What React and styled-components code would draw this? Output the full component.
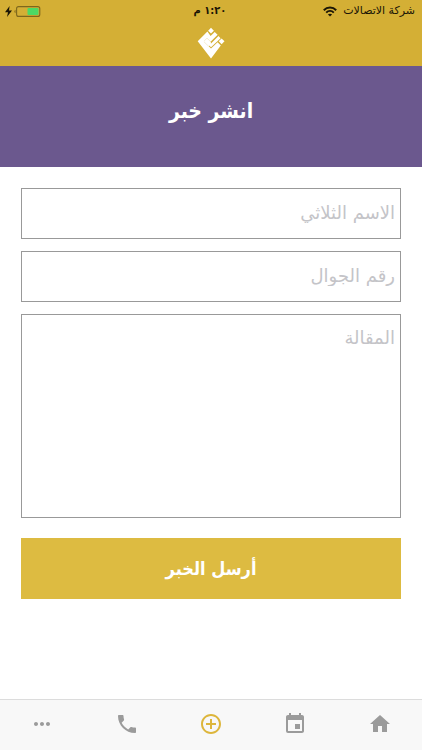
import React, { useState } from 'react';
import styled, { createGlobalStyle } from 'styled-components';
import { MdHome, MdEvent, MdAddCircleOutline, MdPhone, MdMoreHoriz } from 'react-icons/md';

const GlobalStyle = createGlobalStyle`
  * {
    box-sizing: border-box;
  }
  body {
    margin: 0;
    background: #fff;
    font-family: 'DejaVu Sans', sans-serif;
  }
`;

const Screen = styled.div`
  display: flex;
  flex-direction: column;
  min-height: 100vh;
`;

const Header = styled.header`
  background: #d4af35;
`;

const StatusBar = styled.div`
  display: grid;
  grid-template-columns: 1fr auto 1fr;
  align-items: center;
  height: 22px;
  padding: 0 7px 0 5px;
  color: #1b1606;
  font-size: 11px;
  line-height: 20px;
`;

const Carrier = styled.div`
  display: flex;
  align-items: center;
  gap: 6px;
`;

const Clock = styled.div`
  font-family: 'DejaVu Sans Condensed', 'DejaVu Sans', sans-serif;
  font-weight: bold;
`;

const Power = styled.div`
  display: flex;
  align-items: center;
  justify-content: flex-end;
  gap: 2px;
`;

const LogoBar = styled.div`
  display: flex;
  justify-content: center;
  height: 44px;
  padding-top: 5px;
`;

const Hero = styled.div`
  display: flex;
  align-items: center;
  justify-content: center;
  height: 101px;
  padding-bottom: 12px;
  background: #6b588e;
`;

const Title = styled.h1`
  margin: 0;
  color: #fff;
  font-family: 'DejaVu Sans Condensed', 'DejaVu Sans', sans-serif;
  font-size: 21px;
  line-height: 36px;
  font-weight: bold;
`;

const Form = styled.form`
  display: flex;
  flex: 1;
  flex-direction: column;
  gap: 12px;
  padding: 21px 21px 40px;
`;

const Field = styled.input`
  width: 100%;
  height: 51px;
  padding: 0 5px 2px;
  border: 1px solid #999;
  border-radius: 0;
  background: #fff;
  color: #333;
  font-family: inherit;
  font-size: 18px;
  &::placeholder {
    color: #c4c4c8;
    opacity: 1;
  }
`;

const Article = styled(Field)`
  display: block;
  height: 204px;
  padding: 11px 5px;
  line-height: 24px;
  resize: none;
`;

const SendButton = styled.button`
  height: 61px;
  margin-top: 8px;
  border: 0;
  background: #ddbb41;
  color: #fff;
  font-family: 'DejaVu Sans Condensed', 'DejaVu Sans', sans-serif;
  font-size: 18px;
  font-weight: bold;
  cursor: pointer;
`;

const TabBar = styled.nav`
  display: grid;
  grid-template-columns: repeat(5, 1fr);
  height: 51px;
  border-top: 1px solid #dcdcdc;
  background: #f8f8f8;
`;

const Tab = styled.a`
  display: flex;
  align-items: center;
  justify-content: center;
  padding-bottom: 2px;
  color: ${(props) => (props.$active ? '#ddb63c' : '#9b9b9b')};
`;

const WifiIcon = () => (
  <svg width="14" height="11" viewBox="0 0 14 11" fill="none" stroke="#1b1606" strokeWidth="2">
    <path d="M0.8 4.2C4.3 0.7 9.7 0.7 13.2 4.2" />
    <path d="M3.2 6.6C5.4 4.5 8.6 4.5 10.8 6.6" />
    <path d="M7 10.6L4.9 8.5C6.1 7.4 7.9 7.4 9.1 8.5Z" fill="#1b1606" stroke="none" />
  </svg>
);

const BoltIcon = () => (
  <svg width="7" height="11" viewBox="0 0 7 11" fill="#1b1606">
    <path d="M4.6 0L0 6.2H3L2 11L7 4.5H4Z" />
  </svg>
);

const BatteryIcon = () => (
  <svg width="27" height="11" viewBox="0 0 27 11">
    <path d="M1.5 3.8C0 4.3 0 6.7 1.5 7.2Z" fill="#7d671d" />
    <rect x="2.6" y="0.6" width="23.2" height="9.8" rx="2" fill="none" stroke="#7d671d" strokeWidth="1.1" />
    <rect x="13.5" y="2" width="11" height="7" rx="1" fill="#4cd964" />
  </svg>
);

const Logo = () => (
  <svg width="28" height="32" viewBox="0 0 28 32" fill="#fff" role="img" aria-label="الشعار">
    <path d="M14 0.8L16.9 3.7L14 6.6L11.1 3.7Z" />
    <path d="M24.6 11.4L27.5 14.3L24.6 17.2L21.700 14.3Z" />
    <path d="M10.4 4.6L0.7 14.3L14 31.6L23.8 18.6L20.6 15.2L14 21.6L6.8 14.4L10 11.2L13.6 14.8L20.6 7.800L17.700 4.900L13.600 9Z" />
    <path d="M8.200 14.4L10 12.600L14 16.600L21.500 9.100L23.600 11.200L14 20.200Z" />
    <path d="M10 15.800L11.500 14.300M6.800 14.400L10 11.200L14 15.200L12 19.600Z" />
  </svg>
);

const tabs = [
  { id: 'home', label: 'الرئيسية', Icon: MdHome },
  { id: 'events', label: 'المناسبات', Icon: MdEvent },
  { id: 'publish', label: 'انشر خبر', Icon: MdAddCircleOutline },
  { id: 'contact', label: 'اتصل بنا', Icon: MdPhone },
  { id: 'more', label: 'المزيد', Icon: MdMoreHoriz },
];

const App = () => {
  const [values, setValues] = useState({ name: '', mobile: '', article: '' });

  const handleChange = (event) => {
    setValues({ ...values, [event.target.name]: event.target.value });
  };

  return (
    <Screen dir="rtl" lang="ar">
      <GlobalStyle />
      <Header>
        <StatusBar>
          <Carrier>
            شركة الاتصالات
            <WifiIcon />
          </Carrier>
          <Clock>١:٢٠ م</Clock>
          <Power>
            <BatteryIcon />
            <BoltIcon />
          </Power>
        </StatusBar>
        <LogoBar>
          <Logo />
        </LogoBar>
      </Header>
      <Hero>
        <Title>انشر خبر</Title>
      </Hero>
      <Form onSubmit={(event) => event.preventDefault()}>
        <Field
          name="name"
          aria-label="الاسم الثلاثي"
          placeholder="الاسم الثلاثي"
          value={values.name}
          onChange={handleChange}
        />
        <Field
          name="mobile"
          aria-label="رقم الجوال"
          placeholder="رقم الجوال"
          value={values.mobile}
          onChange={handleChange}
        />
        <Article
          as="textarea"
          name="article"
          aria-label="المقالة"
          placeholder="المقالة"
          value={values.article}
          onChange={handleChange}
        />
        <SendButton type="submit">أرسل الخبر</SendButton>
      </Form>
      <TabBar>
        {tabs.map(({ id, label, Icon }) => (
          <Tab key={id} href={`#${id}`} aria-label={label} $active={id === 'publish'}>
            <Icon size={24} />
          </Tab>
        ))}
      </TabBar>
    </Screen>
  );
};

export default App;
